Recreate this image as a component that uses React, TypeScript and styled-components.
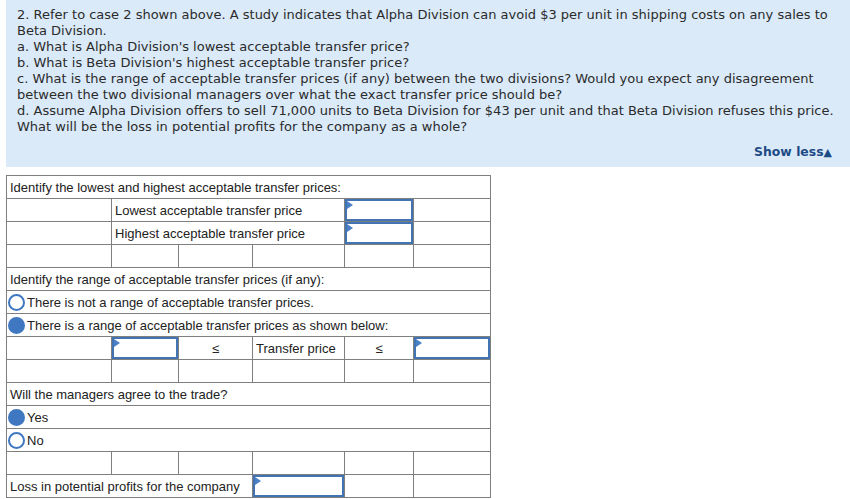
import React from 'react';
import styled, { createGlobalStyle } from 'styled-components';

const Global = createGlobalStyle`
  html, body {
    margin: 0;
    padding: 0;
    background: #fff;
  }
  body {
    font-family: "Liberation Sans", Arial, sans-serif;
  }
`;

const Page = styled.div`
  padding-left: 6px;
  width: 844px;
  overflow: hidden;
`;

const Question = styled.div`
  background: #daeaf9;
  padding: 7px 18px 7px 11px;
  font-family: "DejaVu Sans", Verdana, sans-serif;
  font-size: 13px;
  line-height: 16px;
  color: #2b2b2b;
`;

const QLine = styled.div`
  white-space: nowrap;
`;

const ShowLess = styled.div`
  margin-top: 9px;
  height: 16px;
  text-align: right;
  font-weight: bold;
  color: #1d4a85;
  font-size: 12.4px;
`;

const Arrow = styled.span`
  font-size: 11px;
  line-height: 1;
`;

const Table = styled.table`
  margin-top: 8px;
  border-collapse: collapse;
  table-layout: fixed;
  width: 484px;
  font-size: 13px;
  color: #222;
`;

const Cell = styled.td<{ $center?: boolean }>`
  border: 1px solid #7f7f7f;
  height: 22px;
  padding: 0 3px;
  text-align: ${(p) => (p.$center ? 'center' : 'left')};
  white-space: nowrap;
  overflow: hidden;
  vertical-align: middle;
`;

const InputCell = styled.td`
  border: 1px solid #7f7f7f;
  height: 22px;
  padding: 0;
`;

const InputBox = styled.div`
  position: relative;
  height: 22px;
  box-sizing: border-box;
  border: 2px solid #4274b4;
  background: #fff;
  &::before {
    content: '';
    position: absolute;
    left: 0;
    top: 0;
    border-top: 4px solid transparent;
    border-bottom: 4px solid transparent;
    border-left: 6px solid #4a80c6;
  }
`;

const RadioLabel = styled.div`
  display: flex;
  align-items: center;
  margin-left: -2px;
`;

const Radio = styled.span<{ $on?: boolean }>`
  display: inline-block;
  flex: none;
  width: 17px;
  height: 17px;
  box-sizing: border-box;
  border-radius: 50%;
  border: 2px solid #3f78c0;
  background: ${(p) => (p.$on ? '#3f78c0' : '#fff')};
  margin-right: 2px;
`;

function Field() {
  return (
    <InputCell>
      <InputBox />
    </InputCell>
  );
}

function EmptyRow() {
  return (
    <tr>
      {[0, 1, 2, 3, 4, 5].map((i) => (
        <Cell key={i} />
      ))}
    </tr>
  );
}

function RadioRow(props: { on?: boolean; label: string }) {
  return (
    <tr>
      <Cell colSpan={6}>
        <RadioLabel>
          <Radio $on={props.on} />
          {props.label}
        </RadioLabel>
      </Cell>
    </tr>
  );
}

const lines = [
  '2. Refer to case 2 shown above. A study indicates that Alpha Division can avoid $3 per unit in shipping costs on any sales to',
  'Beta Division.',
  "a. What is Alpha Division's lowest acceptable transfer price?",
  "b. What is Beta Division's highest acceptable transfer price?",
  'c. What is the range of acceptable transfer prices (if any) between the two divisions? Would you expect any disagreement',
  'between the two divisional managers over what the exact transfer price should be?',
  'd. Assume Alpha Division offers to sell 71,000 units to Beta Division for $43 per unit and that Beta Division refuses this price.',
  'What will be the loss in potential profits for the company as a whole?',
];

export default function App() {
  return (
    <Page>
      <Global />
      <Question>
        {lines.map((l) => (
          <QLine key={l}>{l}</QLine>
        ))}
        <ShowLess>
          Show less<Arrow>▲</Arrow>
        </ShowLess>
      </Question>
      <Table>
        <colgroup>
          <col style={{ width: 105 }} />
          <col style={{ width: 67 }} />
          <col style={{ width: 74 }} />
          <col style={{ width: 92 }} />
          <col style={{ width: 69 }} />
          <col style={{ width: 77 }} />
        </colgroup>
        <tbody>
          <tr>
            <Cell colSpan={6}>Identify the lowest and highest acceptable transfer prices:</Cell>
          </tr>
          <tr>
            <Cell />
            <Cell colSpan={3}>Lowest acceptable transfer price</Cell>
            <Field />
            <Cell />
          </tr>
          <tr>
            <Cell />
            <Cell colSpan={3}>Highest acceptable transfer price</Cell>
            <Field />
            <Cell />
          </tr>
          <EmptyRow />
          <tr>
            <Cell colSpan={6}>Identify the range of acceptable transfer prices (if any):</Cell>
          </tr>
          <RadioRow label="There is not a range of acceptable transfer prices." />
          <RadioRow on label="There is a range of acceptable transfer prices as shown below:" />
          <tr>
            <Cell />
            <Field />
            <Cell $center>≤</Cell>
            <Cell>Transfer price</Cell>
            <Cell $center>≤</Cell>
            <Field />
          </tr>
          <EmptyRow />
          <tr>
            <Cell colSpan={6}>Will the managers agree to the trade?</Cell>
          </tr>
          <RadioRow on label="Yes" />
          <RadioRow label="No" />
          <EmptyRow />
          <tr>
            <Cell colSpan={3}>Loss in potential profits for the company</Cell>
            <Field />
            <Cell />
            <Cell />
          </tr>
        </tbody>
      </Table>
    </Page>
  );
}
